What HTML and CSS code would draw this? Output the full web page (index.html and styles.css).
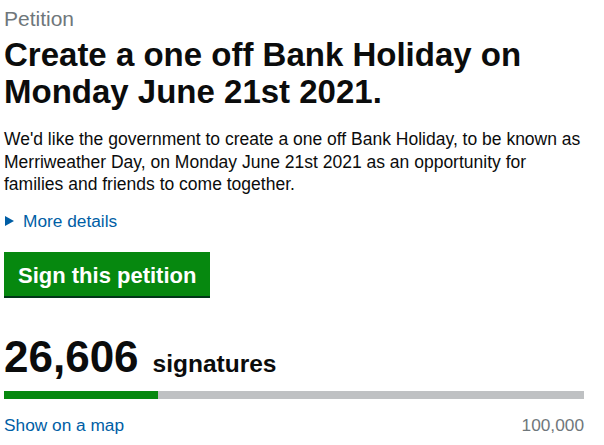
FILE: index.html
```html
<!DOCTYPE html>
<html lang="en">
<head>
    <meta charset="UTF-8">
    <meta name="viewport" content="width=device-width, initial-scale=1.0">
    <title>Petition: Create a one off Bank Holiday on Monday June 21st 2021</title>
    <link rel="stylesheet" href="styles.css">
</head>
<body>
    <div class="container">
        <span class="caption">Petition</span>
        <h1 class="heading">Create a one off Bank Holiday on Monday June 21st 2021.</h1>
        <p class="summary">We'd like the government to create a one off Bank Holiday, to be known as Merriweather Day, on Monday June 21st 2021 as an opportunity for families and friends to come together.</p>
        <div class="details">
            <span class="details-arrow"></span>
            <a href="#" class="link">More details</a>
        </div>
        <a href="#" class="button">Sign this petition</a>
        <div class="count">
            <span class="count-number">26,606</span>
            <span class="count-label">signatures</span>
        </div>
        <div class="progress">
            <div class="progress-fill" style="width: 26.606%"></div>
        </div>
        <div class="progress-footer">
            <a href="#" class="link">Show on a map</a>
            <span class="target">100,000</span>
        </div>
    </div>
</body>
</html>
```

FILE: styles.css
```css
body {
    font-family: "Liberation Sans", Arial, sans-serif;
    color: #0b0c0c;
    background-color: #fff;
    margin: 0;
    padding: 0;
}
.container {
    padding: 7px 20px 0 4px;
}
.caption {
    display: block;
    font-size: 21px;
    line-height: 24px;
    color: #6f777b;
}
.heading {
    margin: 5px 0 0;
    font-size: 33px;
    line-height: 37px;
    font-weight: bold;
}
.summary {
    margin: 18px -2px 0 0;
    font-size: 17.5px;
    line-height: 22.7px;
}
.details {
    display: flex;
    align-items: center;
    margin-top: 14px;
    font-size: 17.3px;
    line-height: 22.7px;
}
.details-arrow {
    width: 0;
    height: 0;
    margin: 0 9px 0 1px;
    border-style: solid;
    border-width: 5.5px 0 5.5px 9.5px;
    border-color: transparent transparent transparent #005ea5;
}
.link {
    color: #005ea5;
    text-decoration: none;
}
.button {
    display: inline-block;
    margin-top: 19px;
    padding: 10px 14px 7px;
    font-size: 22px;
    line-height: 27px;
    font-weight: bold;
    color: #fff;
    background: #06880f;
    box-shadow: 0 2px 0 #003618;
    text-decoration: none;
}
.count {
    display: flex;
    align-items: baseline;
    margin-top: 39px;
}
.count-number {
    font-size: 44px;
    line-height: 43px;
    font-weight: bold;
}
.count-label {
    margin-left: 14px;
    font-size: 24.5px;
    font-weight: bold;
}
.progress {
    margin-top: 13px;
    height: 8px;
    background: #bfc1c3;
}
.progress-fill {
    height: 100%;
    background: #06880f;
}
.progress-footer {
    display: flex;
    justify-content: space-between;
    margin-top: 15px;
    font-size: 17.3px;
    line-height: 22.7px;
}
.target {
    color: #6f777b;
}
```
